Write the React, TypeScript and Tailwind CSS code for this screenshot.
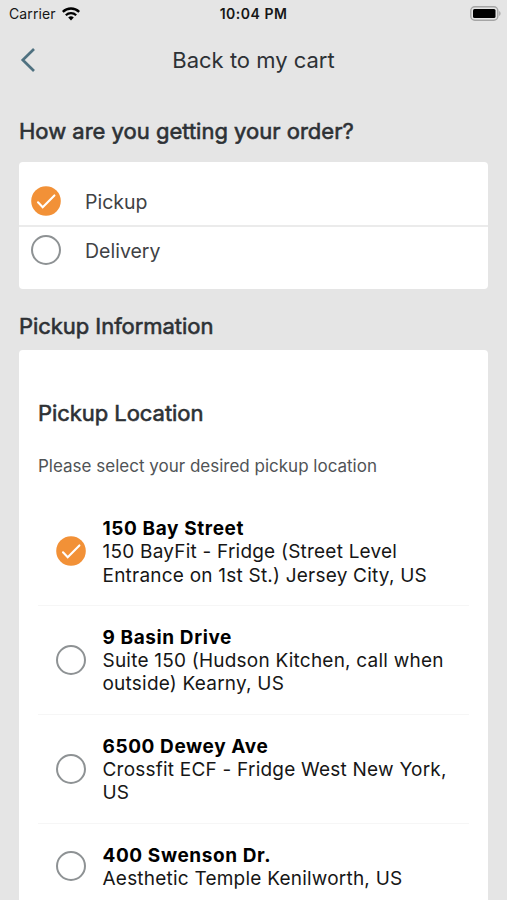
interface RadioProps {
  checked?: boolean;
}

interface PickupLocation {
  name: string;
  lines: string[];
}

const methods = ["Pickup", "Delivery"];

const locations: PickupLocation[] = [
  {
    name: "150 Bay Street",
    lines: [
      "150 BayFit - Fridge (Street Level",
      "Entrance on 1st St.) Jersey City, US",
    ],
  },
  {
    name: "9 Basin Drive",
    lines: ["Suite 150 (Hudson Kitchen, call when", "outside) Kearny, US"],
  },
  {
    name: "6500 Dewey Ave",
    lines: ["Crossfit ECF - Fridge West New York,", "US"],
  },
  {
    name: "400 Swenson Dr.",
    lines: ["Aesthetic Temple Kenilworth, US"],
  },
];

function Radio({ checked }: RadioProps) {
  if (checked) {
    return (
      <svg className="shrink-0" width="30" height="30" viewBox="0 0 30 30" fill="none">
        <circle cx="15" cy="15" r="14.8" fill="#f29137" />
        <path
          d="m7 16.3 4.7 4.9L23.4 9.4"
          stroke="#fff"
          strokeWidth="2.1"
          strokeLinecap="round"
        />
      </svg>
    );
  }
  return (
    <span className="h-[30px] w-[30px] shrink-0 rounded-full border-2 border-[#8e9294]" />
  );
}

function StatusBar() {
  return (
    <div className="grid h-7 grid-cols-3 items-center px-[9px] text-[14px] text-[#161616]">
      <div className="flex items-center gap-[6px] pb-px">
        <span className="tracking-[0.1px]">Carrier</span>
        <svg width="18" height="14" viewBox="0 0 18 14" fill="none">
          <path d="M.8 4.8a11.8 11.8 0 0 1 16.4 0" stroke="#000" strokeWidth="2.4" />
          <path d="M3.8 8.2a7.5 7.5 0 0 1 10.4 0" stroke="#000" strokeWidth="2.2" />
          <path d="M9 13.5 6.2 10.6a4 4 0 0 1 5.6 0z" fill="#000" />
        </svg>
      </div>
      <span className="pb-[2px] text-center font-semibold tracking-[0.5px] whitespace-nowrap">
        10:04 PM
      </span>
      <svg className="-mt-[2px] -mr-[3px] justify-self-end" width="31" height="15" viewBox="0 0 31 15">
        <rect x="0.8" y="0.8" width="27" height="13.4" rx="4" fill="none" stroke="#a5a5a5" strokeWidth="1.4" />
        <rect x="3" y="3" width="22.5" height="9" rx="1.5" fill="#000" />
        <path d="M29.2 5c1.8.8 1.8 4.2 0 5z" fill="#a5a5a5" />
      </svg>
    </div>
  );
}

export default function App() {
  return (
    <div className="h-[900px] overflow-hidden bg-[#e5e5e5] font-['Inter',sans-serif] text-[#2d3135]">
      <StatusBar />

      <header className="grid h-16 grid-cols-[60px_1fr_60px] items-center">
        <svg className="ml-5" width="16" height="24" viewBox="0 0 16 24" fill="none">
          <path d="M14 1 2.8 12 14 23" stroke="#4f7180" strokeWidth="2.7" />
        </svg>
        <h1 className="text-center text-[22px]">Back to my cart</h1>
      </header>

      <main className="px-[19px]">
        <h2 className="pt-[23px] text-[22px] leading-[32px] [-webkit-text-stroke:0.6px_#2d3135]">
          How are you getting your order?
        </h2>

        <div className="mt-[15px] h-[127px] rounded-[4px] bg-white pt-[15px]">
          {methods.map((method, i) => (
            <div
              key={method}
              className="flex h-[50px] items-center gap-6 border-b-2 border-[#ebebeb] px-3 text-[19.5px] text-[#3f4245] last:h-[46px] last:border-0"
            >
              <Radio checked={i === 0} />
              <span className="pt-[3px]">{method}</span>
            </div>
          ))}
        </div>

        <h2 className="mt-[21px] text-[22px] leading-[32px] tracking-[-0.05px] [-webkit-text-stroke:0.6px_#2d3135]">
          Pickup Information
        </h2>

        <div className="mt-2 h-[560px] rounded-t-[4px] bg-white px-[19px] pt-[47px]">
          <h3 className="text-[22px] leading-[32px] tracking-[-0.05px] [-webkit-text-stroke:0.6px_#2d3135]">
            Pickup Location
          </h3>
          <p className="mt-[24px] text-[17px] leading-[26px] text-[#505356]">
            Please select your desired pickup location
          </p>
          <ul className="mt-[18px]">
            {locations.map((location, i) => (
              <li
                key={location.name}
                className="flex items-center gap-[17px] border-b border-[#f6f6f6] pt-[20px] pb-[18px] pl-[17.5px] text-[19px] leading-[23.3px] tracking-[0.22px] text-[#161616]"
              >
                <div className="-mt-[2px] shrink-0">
                  <div className="flex">
                    <Radio checked={i === 0} />
                  </div>
                </div>
                <div className="whitespace-nowrap">
                  <p className="font-bold tracking-[0.6px] text-black">{location.name}</p>
                  {location.lines.map((line) => (
                    <p key={line}>{line}</p>
                  ))}
                </div>
              </li>
            ))}
          </ul>
        </div>
      </main>
    </div>
  );
}
